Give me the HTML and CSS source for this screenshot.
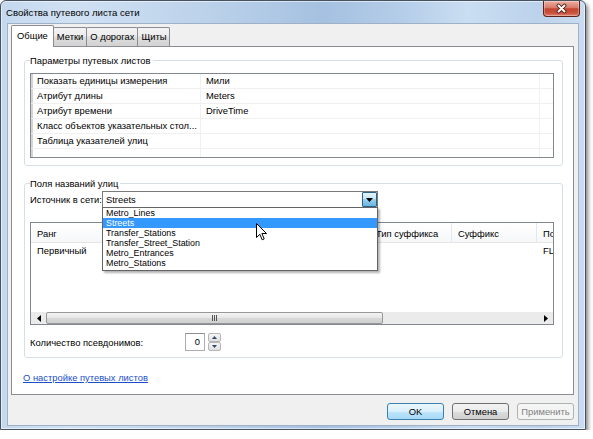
FILE: index.html
```html
<!DOCTYPE html>
<html lang="ru">
<head>
<meta charset="utf-8">
<title>Свойства путевого листа сети</title>
<link rel="stylesheet" href="styles.css">
</head>
<body>
<div class="window">
  <div class="titlebar">
    <span class="title">Свойства путевого листа сети</span>
    <div class="close-btn">
      <svg width="13" height="11" viewBox="0 0 13 11">
        <path d="M3.5 2.5 L9.5 8.5 M9.5 2.5 L3.5 8.5" stroke="#4a1a14" stroke-width="3.8" stroke-linecap="round" fill="none"/>
        <path d="M3.5 2.5 L9.5 8.5 M9.5 2.5 L3.5 8.5" stroke="#ffffff" stroke-width="2" stroke-linecap="round" fill="none"/>
      </svg>
    </div>
  </div>
  <div class="client">
    <div class="tabs">
      <div class="tab tab-active">Общие</div>
      <div class="tab">Метки</div>
      <div class="tab">О дорогах</div>
      <div class="tab">Щиты</div>
    </div>
    <div class="panel">
      <fieldset class="group group-params">
        <legend>Параметры путевых листов</legend>
        <div class="pgrid">
          <div class="prow"><span class="pstrip"></span><span class="pname">Показать единицы измерения</span><span class="pval">Мили</span><span class="pend"></span></div>
          <div class="prow"><span class="pstrip"></span><span class="pname">Атрибут длины</span><span class="pval">Meters</span><span class="pend"></span></div>
          <div class="prow"><span class="pstrip"></span><span class="pname">Атрибут времени</span><span class="pval">DriveTime</span><span class="pend"></span></div>
          <div class="prow"><span class="pstrip"></span><span class="pname">Класс объектов указательных стол...</span><span class="pval"></span><span class="pend"></span></div>
          <div class="prow"><span class="pstrip"></span><span class="pname">Таблица указателей улиц</span><span class="pval"></span><span class="pend"></span></div>
          <div class="prow prow-filler"><span class="pstrip"></span><span class="pname"></span><span class="pval"></span><span class="pend"></span></div>
        </div>
      </fieldset>

      <fieldset class="group group-streets">
        <legend>Поля названий улиц</legend>
        <div class="source-row">
          <span class="source-label">Источник в сети:</span>
          <div class="combo">
            <span class="combo-text">Streets</span>
            <span class="combo-btn">
              <svg width="7" height="4" viewBox="0 0 7 4"><path d="M0 0 H7 L3.5 4 Z" fill="#000"/></svg>
            </span>
            <div class="dropdown">
              <div class="dd-item">Metro_Lines</div>
              <div class="dd-item dd-item-selected">Streets</div>
              <div class="dd-item">Transfer_Stations</div>
              <div class="dd-item">Transfer_Street_Station</div>
              <div class="dd-item">Metro_Entrances</div>
              <div class="dd-item">Metro_Stations</div>
              <svg class="cursor" width="12" height="18" viewBox="0 0 12 18">
                <path d="M0.5 0.5 L0.5 14.5 L3.8 11.3 L6.2 16.8 L8.2 15.9 L5.9 10.5 L10.5 10.5 Z" fill="#fff" stroke="#000" stroke-width="1" stroke-linejoin="miter"/>
              </svg>
            </div>
          </div>
        </div>

        <div class="sfields">
          <div class="sf-row sf-head">
            <span>Ранг</span>
            <span>Префикс</span>
            <span>Тип префикса</span>
            <span>Имя</span>
            <span>Тип суффикса</span>
            <span>Суффикс</span>
            <span>Полное имя</span>
          </div>
          <div class="sf-row sf-data">
            <span>Первичный</span>
            <span></span>
            <span></span>
            <span></span>
            <span></span>
            <span></span>
            <span>FLNAME</span>
          </div>
          <div class="sf-fill"></div>
          <div class="hscroll">
            <span class="sb-arrow"><svg width="4" height="7" viewBox="0 0 4 7"><path d="M4 0 V7 L0 3.5 Z" fill="#000"/></svg></span>
            <span class="sb-thumb"><svg width="6" height="6" viewBox="0 0 6 6"><path d="M0.5 0 V6 M2.5 0 V6 M4.5 0 V6" stroke="#555" stroke-width="1"/></svg></span>
            <span class="sb-track"></span>
            <span class="sb-arrow"><svg width="4" height="7" viewBox="0 0 4 7"><path d="M0 0 V7 L4 3.5 Z" fill="#000"/></svg></span>
          </div>
        </div>

        <div class="alias-row">
          <span class="alias-label">Количество псевдонимов:</span>
          <span class="spin-input">0</span>
          <span class="spin-btns">
            <span class="spin-btn"><svg width="5" height="3" viewBox="0 0 5 3"><path d="M0 3 H5 L2.5 0 Z" fill="#2b4a6b"/></svg></span>
            <span class="spin-btn"><svg width="5" height="3" viewBox="0 0 5 3"><path d="M0 0 H5 L2.5 3 Z" fill="#2b4a6b"/></svg></span>
          </span>
        </div>
      </fieldset>

      <a class="help-link" href="#">О настройке путевых листов</a>
    </div>
    <div class="buttons">
      <button class="btn btn-default">OK</button>
      <button class="btn">Отмена</button>
      <button class="btn btn-disabled">Применить</button>
    </div>
  </div>
</div>
</body>
</html>
```

FILE: styles.css
```css
* { box-sizing: border-box; }
html, body { margin: 0; padding: 0; background: #fff; }
body {
  font-family: "Liberation Sans", Arial, sans-serif;
  font-size: 9.4px;
  color: #000;
}

.window {
  width: 586px;
  height: 430px;
  border: 1px solid #46525f;
  border-radius: 6px 6px 0 0;
  background: linear-gradient(90deg, #c4d8ee 0%, #d0e1f3 12%, #bcd2ea 35%, #a5c1e1 55%, #b3cce8 68%, #cadef2 80%, #bcd2eb 92%, #cbdcf0 100%);
  box-shadow: 2px 3px 4px rgba(0, 0, 0, .5), inset 0 0 0 1px rgba(255, 255, 255, .55);
  padding: 0 6px 3px 6px;
  display: flex;
  flex-direction: column;
}

.titlebar {
  height: 22px;
  flex: none;
  display: flex;
  align-items: flex-start;
}
.title {
  margin: 6px 0 0 -1px;
  font-size: 9.6px;
  line-height: 12px;
}
.close-btn {
  margin-left: auto;
  margin-right: -1px;
  width: 37px;
  height: 16px;
  border: 1px solid #5e211b;
  border-top: none;
  border-radius: 0 0 4px 4px;
  background: linear-gradient(#eab0a4 0%, #d9796a 45%, #c3442f 52%, #c9513c 80%, #e0846f 100%);
  box-shadow: inset 0 0 0 1px rgba(255, 255, 255, .3);
  display: flex;
  align-items: center;
  justify-content: center;
}

.client {
  height: 403px;
  flex: none;
  background: #f0f0f0;
  border: 1px solid #9fb1c6;
  padding: 1px 4px 0 3px;
}

.tabs {
  display: flex;
  align-items: flex-end;
  height: 21px;
}
.tab {
  height: 19px;
  padding: 0 3px;
  margin-left: -1px;
  border: 1px solid #898c95;
  border-bottom: none;
  border-radius: 2px 2px 0 0;
  background: linear-gradient(#f4f4f4, #ececec 45%, #dedede 50%, #d2d2d2);
  line-height: 17px;
  white-space: nowrap;
}
.tab-active {
  position: relative;
  z-index: 1;
  height: 22px;
  margin-left: 0;
  margin-bottom: -1px;
  padding: 0 5px 0 5px;
  background: #fff;
  line-height: 20px;
}

.panel {
  height: 349px;
  border: 1px solid #898c95;
  background: #fff;
  padding: 0 10px 0 12px;
}

.group {
  margin: 0;
  padding: 0 8px 0 5px;
  border: 1px solid #d5dfe5;
  border-radius: 3px;
  min-width: 0;
}
.group legend {
  padding: 0 2px 0 0;
  margin: 0;
  line-height: 13px;
}
.group-params {
  margin-top: 7px;
  padding-bottom: 7px;
}
.group-streets {
  margin-top: 11px;
  padding-bottom: 6px;
}

.pgrid {
  margin-top: 6px;
  border: 1px solid #828790;
  background: #fff;
}
.prow {
  display: grid;
  grid-template-columns: 2px 168px 339px 1fr;
  height: 15px;
  border-bottom: 1px solid #f0f0f0;
}
.prow > span {
  line-height: 14px;
  white-space: nowrap;
  overflow: hidden;
}
.pstrip { background: #d4d4d4; }
.pname {
  padding-left: 4px;
  border-right: 1px solid #f0f0f0;
}
.pval {
  padding-left: 5px;
  border-right: 1px solid #f0f0f0;
}
.prow-filler {
  height: 8px;
  border-bottom: none;
}

.source-row {
  display: flex;
  align-items: center;
  height: 17px;
  margin-top: 1px;
}
.source-label {
  width: 72px;
  flex: none;
  white-space: nowrap;
}
.combo {
  position: relative;
  width: 276px;
  height: 17px;
  border: 1px solid #7a7a7a;
  background: #fff;
  display: flex;
  align-items: center;
}
.combo-text {
  flex: 1;
  padding-left: 3px;
}
.combo-btn {
  width: 15px;
  height: 15px;
  border: 1px solid #2c628b;
  border-radius: 1px;
  background: linear-gradient(#e5f4fc, #c4e5f6 50%, #98d1ef 50%, #6cb5dd);
  display: flex;
  align-items: center;
  justify-content: center;
}
.dropdown {
  position: absolute;
  left: -1px;
  top: 15px;
  width: 276px;
  padding-bottom: 2px;
  border: 1px solid #646464;
  background: #fff;
  box-shadow: 2px 2px 2px rgba(0, 0, 0, .3);
  z-index: 5;
}
.dd-item {
  height: 10px;
  line-height: 10px;
  padding-left: 3px;
  font-size: 8.9px;
  white-space: nowrap;
}
.dd-item-selected {
  background: #3399ff;
  color: #fff;
}
.cursor {
  position: absolute;
  left: 153px;
  top: 15px;
}

.sfields {
  margin-top: 14px;
  height: 103px;
  border: 1px solid #828790;
  background: #fff;
  display: flex;
  flex-direction: column;
  overflow: hidden;
}
.sf-row {
  flex: none;
  display: grid;
  grid-template-columns: 89px 80px 80px 90px 82px 85px 120px;
}
.sf-head {
  height: 20px;
  border-bottom: 1px solid #e5e5e5;
  background: linear-gradient(#fff, #f6f7f9);
}
.sf-head span {
  line-height: 21px;
  padding-left: 6px;
  border-right: 1px solid #e3e8ee;
  white-space: nowrap;
  overflow: hidden;
}
.sf-data span {
  line-height: 16px;
  padding-left: 6px;
  white-space: nowrap;
  overflow: hidden;
}
.sf-fill { flex: 1; }
.hscroll {
  height: 12px;
  flex: none;
  display: flex;
  background: #ebebeb;
}
.sb-arrow {
  width: 15px;
  flex: none;
  display: flex;
  align-items: center;
  justify-content: center;
}
.sb-thumb {
  width: 337px;
  flex: none;
  border: 1px solid #979797;
  border-radius: 2px;
  background: linear-gradient(#f4f4f4, #e6e6e6 50%, #d8d8d8 50%, #d0d0d0);
  display: flex;
  align-items: center;
  justify-content: center;
}
.sb-track { flex: 1; }

.alias-row {
  display: flex;
  align-items: center;
  height: 18px;
  margin-top: 8px;
}
.alias-label { width: 155px; flex: none; white-space: nowrap; }
.spin-input {
  width: 20px;
  height: 18px;
  border: 1px solid #abadb3;
  border-top-color: #8e8f8f;
  background: #fff;
  text-align: right;
  padding-right: 4px;
  line-height: 16px;
}
.spin-btns {
  margin-left: 3px;
  width: 13px;
  height: 18px;
  display: flex;
  flex-direction: column;
}
.spin-btn {
  flex: 1;
  border: 1px solid #b5b5b5;
  border-radius: 2px;
  background: linear-gradient(#f6f6f6, #dfdfdf);
  display: flex;
  align-items: center;
  justify-content: center;
}

.help-link {
  display: inline-block;
  margin: 13px 0 0 -1px;
  color: #1a4fc9;
  text-decoration: underline;
  line-height: 13px;
}

.buttons {
  display: flex;
  justify-content: flex-end;
  gap: 8px;
  margin-top: 8px;
}
.btn {
  width: 57px;
  height: 17px;
  padding: 0;
  border: 1px solid #707070;
  border-radius: 3px;
  background: linear-gradient(#f2f2f2, #ebebeb 50%, #dddddd 50%, #cfcfcf);
  font: inherit;
  line-height: 15px;
  color: #000;
}
.btn-default {
  border-color: #3c7fb1;
  background: linear-gradient(#eaf6fd, #d9f0fc 50%, #bee6fd 50%, #a7d9f5);
}
.btn-disabled {
  border-color: #adb2b5;
  background: #f4f4f4;
  color: #838383;
}
```
